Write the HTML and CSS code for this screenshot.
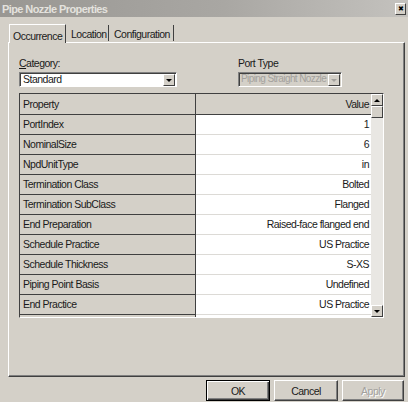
FILE: index.html
```html
<!DOCTYPE html>
<html>
<head>
<meta charset="utf-8">
<link rel="stylesheet" href="styles.css">
</head>
<body>
<div class="window">
  <div class="titlebar">
    <span class="title">Pipe Nozzle Properties</span>
    <span class="close">&#x2716;</span>
  </div>
  <div class="tabs">
    <div class="tab active">Occurrence</div>
    <div class="tab">Location</div>
    <div class="tab">Configuration</div>
  </div>
  <div class="panel">
    <div class="fields">
      <div class="field cat">
        <div class="label"><u>C</u>ategory:</div>
        <div class="combo">
          <span class="combo-text">Standard</span>
          <span class="combo-btn"><span class="arrow-down"></span></span>
        </div>
      </div>
      <div class="field port">
        <div class="label">Port Type</div>
        <div class="combo disabled">
          <span class="combo-text">Piping Straight Nozzle</span>
          <span class="combo-btn"><span class="arrow-down"></span></span>
        </div>
      </div>
    </div>
    <div class="grid">
      <div class="grid-body">
        <div class="row head"><div class="c1">Property</div><div class="c2">Value</div></div>
        <div class="row"><div class="c1">PortIndex</div><div class="c2">1</div></div>
        <div class="row"><div class="c1">NominalSize</div><div class="c2">6</div></div>
        <div class="row"><div class="c1">NpdUnitType</div><div class="c2">in</div></div>
        <div class="row"><div class="c1">Termination Class</div><div class="c2">Bolted</div></div>
        <div class="row"><div class="c1">Termination SubClass</div><div class="c2">Flanged</div></div>
        <div class="row"><div class="c1">End Preparation</div><div class="c2">Raised-face flanged end</div></div>
        <div class="row"><div class="c1">Schedule Practice</div><div class="c2">US Practice</div></div>
        <div class="row"><div class="c1">Schedule Thickness</div><div class="c2">S-XS</div></div>
        <div class="row"><div class="c1">Piping Point Basis</div><div class="c2">Undefined</div></div>
        <div class="row"><div class="c1">End Practice</div><div class="c2">US Practice</div></div>
        <div class="row"><div class="c1"></div><div class="c2"></div></div>
      </div>
      <div class="scrollbar">
        <div class="sb-btn"><span class="arrow-up"></span></div>
        <div class="sb-thumb"></div>
        <div class="sb-track"></div>
        <div class="sb-btn"><span class="arrow-down"></span></div>
      </div>
    </div>
  </div>
  <div class="buttons">
    <div class="btn default"><span>OK</span></div>
    <div class="btn"><span>Cancel</span></div>
    <div class="btn disabled"><span>Apply</span></div>
  </div>
</div>
</body>
</html>
```

FILE: styles.css
```css
* { box-sizing: border-box; }
html, body { margin: 0; padding: 0; }
body {
  width: 408px;
  height: 402px;
  overflow: hidden;
  background: #d4d0c8;
  font-family: "Liberation Sans", Arial, sans-serif;
  font-size: 10.5px;
  letter-spacing: -0.5px;
  color: #1a1a1a;
}
.window { width: 408px; height: 402px; display: flex; flex-direction: column; }

.titlebar {
  height: 17px;
  background: linear-gradient(to right, #999793 0%, #a9a7a3 55%, #c4c2be 100%);
  display: flex;
  align-items: center;
  justify-content: space-between;
  padding: 0 2px 0 2px;
}
.title {
  color: #e4e2de;
  font-weight: bold;
  font-size: 11px;
  letter-spacing: -0.6px;
}
.close {
  width: 11px;
  height: 12px;
  background: #d4d0c8;
  border: 1px solid;
  border-color: #fff #404040 #404040 #fff;
  font-size: 7px;
  line-height: 10px;
  text-align: center;
  letter-spacing: 0;
  color: #000;
  margin-top: 1px;
}

.tabs {
  display: flex;
  align-items: flex-end;
  height: 25px;
  padding-left: 9px;
}
.tab {
  height: 16px;
  padding: 0 3px 0 3px;
  border-right: 1px solid #404040;
  line-height: 18px;
  margin-bottom: 1px;
}
.tab.active {
  height: 19px;
  margin-bottom: -1px;
  padding: 0 3px 0 3px;
  border-top: 1px solid #fff;
  border-left: 1px solid #fff;
  border-right: 1px solid #404040;
  background: #d4d0c8;
  line-height: 22px;
  position: relative;
  z-index: 1;
  width: 57px;
}
.tab:nth-child(2) { margin-left: 2px; width: 41px; }
.tab:nth-child(3) { margin-left: 2px; width: 63px; }

.panel {
  margin: 0 3px 0 8px;
  height: 335px;
  border-top: 1px solid #fff;
  border-left: 1px solid #fff;
  border-right: 1px solid #404040;
  border-bottom: 1px solid #404040;
  box-shadow: inset -1px -1px 0 #808080;
  padding: 14px 0 0 10px;
}

.fields { display: flex; }
.field .label { height: 15px; line-height: 13px; }
.field.cat { width: 219px; }
.label u { text-decoration: underline; }

.combo {
  height: 15px;
  display: flex;
  background: #fff;
  border: 1px solid;
  border-color: #808080 #fff #fff #808080;
  box-shadow: inset 1px 1px 0 #404040;
}
.cat .combo { width: 158px; }
.port .combo { width: 104px; background: #d4d0c8; }
.combo-text {
  flex: 1;
  padding: 0 0 0 3px;
  line-height: 12px;
  white-space: nowrap;
  overflow: hidden;
}
.combo.disabled .combo-text { color: #a3a19d; font-size: 10px; letter-spacing: -0.6px; padding-left: 2px; }
.combo-btn {
  width: 12px;
  height: 12px;
  margin: 1px 1px 0 0;
  background: #d4d0c8;
  border: 1px solid;
  border-color: #fff #404040 #404040 #fff;
  display: flex;
  align-items: center;
  justify-content: center;
}
.combo.disabled .arrow-down { border-top-color: #a3a19d; }

.arrow-down {
  width: 0; height: 0;
  border-left: 3px solid transparent;
  border-right: 3px solid transparent;
  border-top: 3px solid #000;
}
.arrow-up {
  width: 0; height: 0;
  border-left: 3px solid transparent;
  border-right: 3px solid transparent;
  border-bottom: 3px solid #000;
}

.grid {
  margin-top: 6px;
  width: 365px;
  height: 225px;
  border-top: 1px solid #404040;
  border-left: 1px solid #404040;
  border-right: 1px solid #fff;
  border-bottom: 1px solid #fff;
  display: flex;
  overflow: hidden;
}
.grid-body { width: 352px; overflow: hidden; }
.row { display: flex; height: 20px; }
.row.head { height: 21px; }
.c1 {
  width: 176px;
  background: #d4d0c8;
  border-right: 1px solid #404040;
  border-bottom: 1px solid #404040;
  padding-left: 3px;
  line-height: 19px;
  white-space: nowrap;
}
.c2 {
  flex: 1;
  background: #fff;
  border-bottom: 1px solid #dcdad6;
  text-align: right;
  padding-right: 2px;
  line-height: 19px;
  white-space: nowrap;
}
.head .c1 { line-height: 20px; }
.head .c2 { background: #d4d0c8; border-bottom: 1px solid #404040; line-height: 20px; }

.scrollbar {
  width: 12px;
  display: flex;
  flex-direction: column;
  background: #e9e7e3;
}
.sb-btn, .sb-thumb {
  height: 12px;
  background: #d4d0c8;
  border: 1px solid;
  border-color: #fff #404040 #404040 #fff;
  display: flex;
  align-items: center;
  justify-content: center;
}
.sb-track { flex: 1; }

.buttons {
  display: flex;
  justify-content: flex-end;
  gap: 4px;
  padding: 3px 4px 0 0;
}
.btn {
  width: 64px;
  height: 21px;
  background: #d4d0c8;
  border: 1px solid;
  border-color: #fff #404040 #404040 #fff;
  box-shadow: inset -1px -1px 0 #808080;
  display: flex;
  align-items: center;
  justify-content: center;
}
.btn.default {
  border: 1px solid #000;
  box-shadow: inset 1px 1px 0 #fff, inset -1px -1px 0 #404040, inset -2px -2px 0 #808080;
}
.btn.disabled { width: 62px; color: #a3a19d; text-shadow: 1px 1px 0 #fff; }
```
